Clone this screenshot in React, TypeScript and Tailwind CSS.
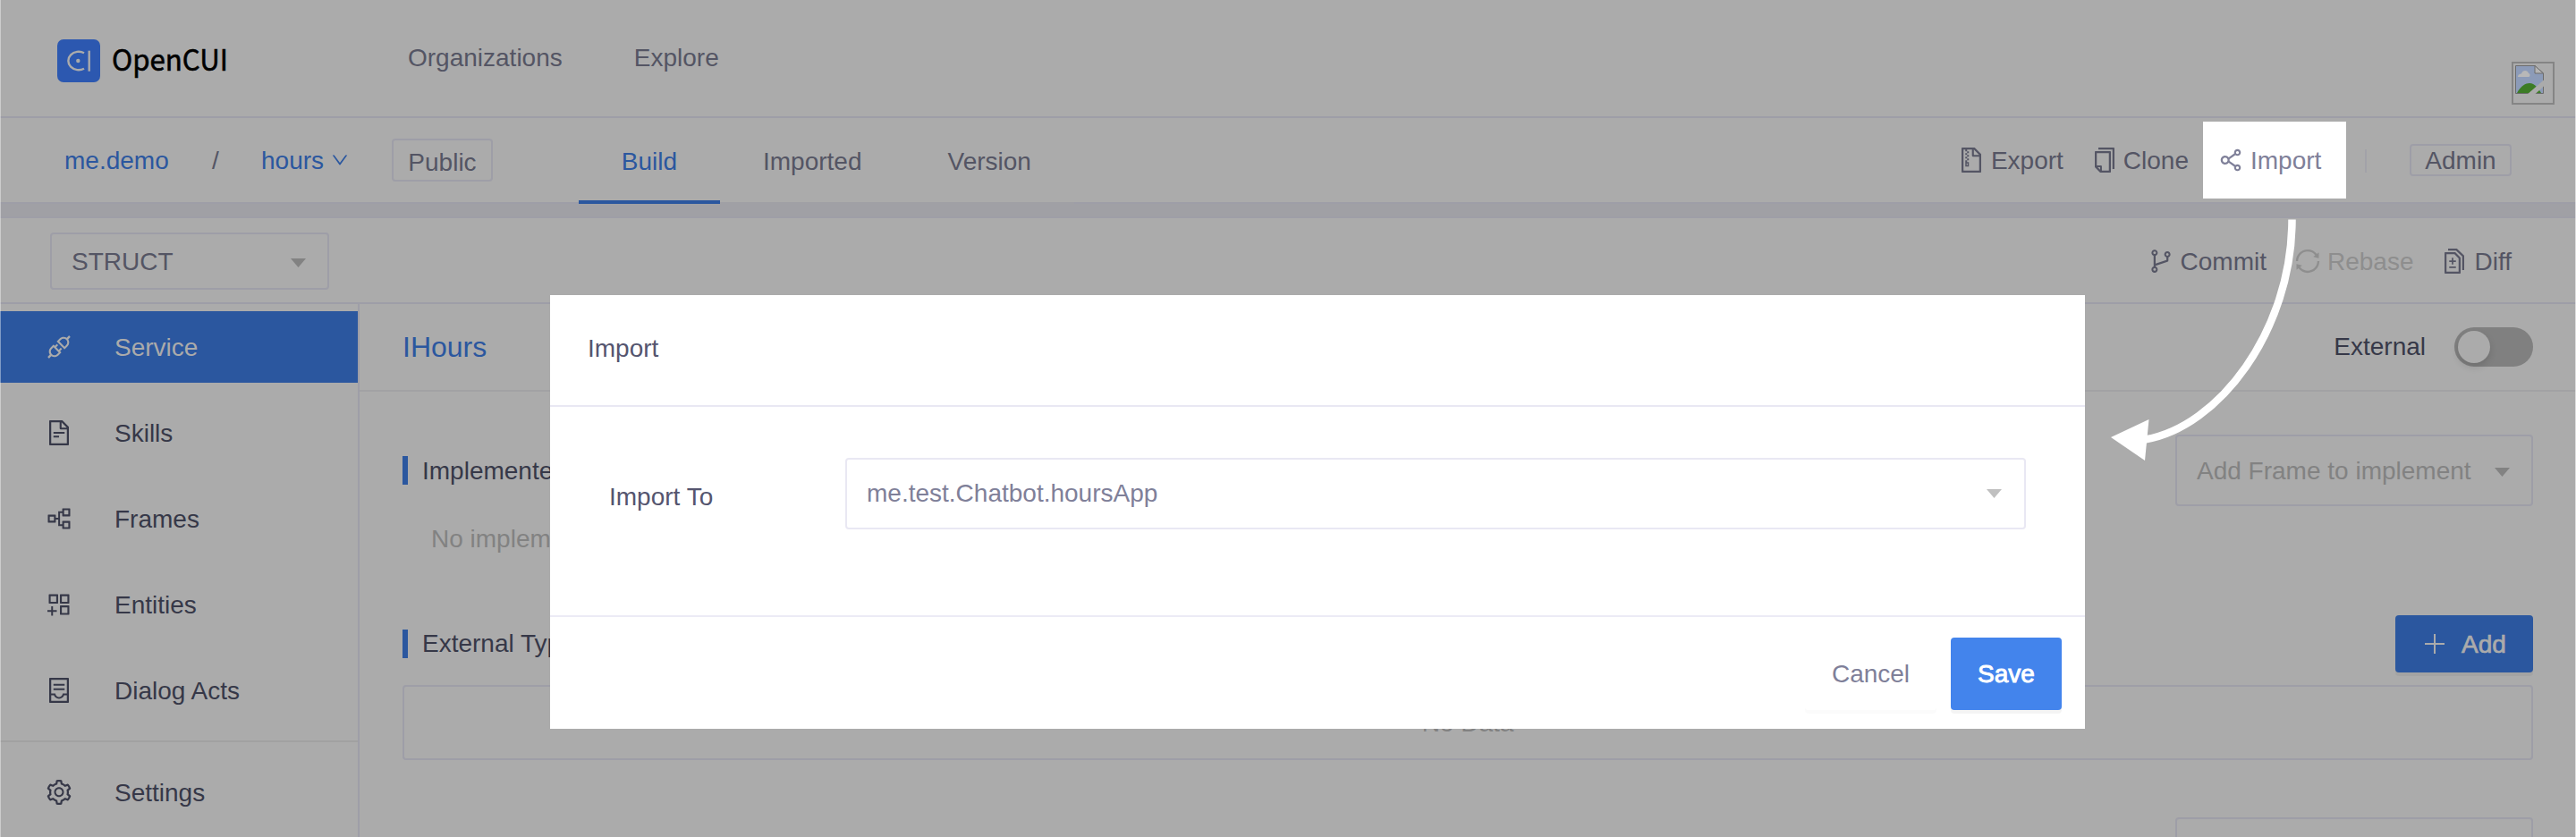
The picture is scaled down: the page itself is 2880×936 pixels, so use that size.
import React from "react";
import {
  AiOutlineApi,
  AiOutlineFileText,
  AiOutlinePartition,
  AiOutlineAppstoreAdd,
  AiOutlineContainer,
  AiOutlineSetting,
  AiOutlineFileZip,
  AiOutlineCopy,
  AiOutlineShareAlt,
  AiOutlineBranches,
  AiOutlineSync,
  AiOutlineDiff,
  AiOutlineDown,
} from "react-icons/ai";

function Caret({ className = "" }: { className?: string }) {
  return (
    <svg className={`h-[10px] w-[17px] shrink-0 ${className}`} viewBox="0 0 17 10">
      <path d="M0 0H17L8.500 10Z" fill="currentColor" />
    </svg>
  );
}

function Label({ children }: { children: React.ReactNode }) {
  return <span className="pt-0.5">{children}</span>;
}

function Logo() {
  return (
    <svg className="h-12 w-12" viewBox="0 0 48 48" fill="none">
      <rect width="48" height="48" rx="7" fill="#2c58b0" />
      <path d="M30 15.300A11.600 10.200 0 1 0 30 32.700" stroke="#ababab" strokeWidth="2.400" />
      <path d="M35.700 12.700V35.700" stroke="#ababab" strokeWidth="2.400" />
      <circle cx="23.300" cy="24" r="2.200" fill="#ababab" />
    </svg>
  );
}

function BrokenImage() {
  return (
    <svg className="h-12 w-12" viewBox="0 0 48 48" fill="none">
      <rect x="1" y="1" width="46" height="46" stroke="#858585" strokeWidth="2" />
      <path d="M4.500 4.500H26L35.500 13V35.500H4.500Z" fill="#8c9bb8" stroke="#6c6c6c" />
      <path d="M26 4.500V13H35.500Z" fill="#b4b4b4" stroke="#6c6c6c" />
      <path d="M7 17C7 14 10 13.500 11 13.500C12 9 18 9 19 13C21 13 21 17 19 17Z" fill="#b8b8b8" />
      <path d="M6 35C10 27 16 24 20 24C26 24 30 30 33 35Z" fill="#3c7c26" />
      <path d="M17.500 36.500L36.500 20V27L26 36.500Z" fill="#ababab" />
    </svg>
  );
}

const menu = [
  { label: "Service", Icon: AiOutlineApi, active: true },
  { label: "Skills", Icon: AiOutlineFileText, active: false },
  { label: "Frames", Icon: AiOutlinePartition, active: false },
  { label: "Entities", Icon: AiOutlineAppstoreAdd, active: false },
  { label: "Dialog Acts", Icon: AiOutlineContainer, active: false },
];

function TopBar() {
  return (
    <header className="flex h-[132px] border-b-2 border-[#9e9ea7] pl-16 pr-6">
      <div className="flex w-[392px] pt-11">
        <Logo />
        <span className="ml-[13px] mt-[-3px] origin-left scale-x-[0.945] font-['Noto_Sans_CJK_SC','Noto_Sans',sans-serif] text-[33px] leading-[48px] text-black [-webkit-text-stroke:0.6px]">
          OpenCUI
        </span>
      </div>
      <nav className="flex gap-20 pt-[45px] leading-10">
        <span>Organizations</span>
        <span>Explore</span>
      </nav>
      <div className="ml-auto pt-[69px]">
        <BrokenImage />
      </div>
    </header>
  );
}

function ProjectBar() {
  return (
    <div className="flex h-24 border-b-2 border-[#9e9ea7] pr-[72px]">
      <div className="flex w-[647px] items-start pl-[72px] pt-7 leading-10">
        <span className="w-[165px] text-[#2b579f]">me.demo</span>
        <span className="w-[55px]">/</span>
        <span className="text-[#2b579f]">hours</span>
        <AiOutlineDown className="ml-[7px] mt-2 size-[22px] text-[#2b579f]" />
        <span className="ml-auto mr-24 mt-[-5px] flex h-12 w-[113px] items-center justify-center rounded border-2 border-[#9e9ea7] pt-1.5">
          Public
        </span>
      </div>
      <nav className="flex h-24 w-[554px] border-b-2 border-[#a0a0a5] leading-10">
        <span className="flex h-24 w-[158px] justify-center border-b-4 border-[#2b579f] pt-[29px] text-[#2b579f]">
          Build
        </span>
        <span className="pl-12 pt-[29px]">Imported</span>
        <span className="pl-24 pt-[29px]">Version</span>
      </nav>
      <div className="ml-auto flex items-start pt-[27px]">
        <span className="flex h-10 items-center">
          <AiOutlineFileZip className="mr-1.5 size-8" />
          <Label>Export</Label>
        </span>
        <span className="ml-[30px] flex h-10 items-center">
          <AiOutlineCopy className="mr-[5px] size-8" />
          <Label>Clone</Label>
        </span>
        <span className="ml-4 mt-[-23px] flex h-[86px] w-40 items-center bg-white pl-[15px] text-[#7f8099]">
          <AiOutlineShareAlt className="mr-1.5 size-8" />
          <Label>Import</Label>
        </span>
        <span className="ml-[21px] mt-2 h-[26px] w-0.5 bg-[#a2a2a8]" />
        <span className="ml-12 mt-0.5 flex h-9 w-[114px] items-center justify-center rounded border-2 border-[#9e9ea7]">
          <Label>Admin</Label>
        </span>
      </div>
    </div>
  );
}

function ToolBar() {
  return (
    <div className="flex h-[98px] border-b-2 border-t-2 border-[#9e9ea7] pl-14 pr-[72px] pt-4">
      <div className="flex h-16 w-[312px] items-center justify-between rounded border-2 border-[#9e9ea7] pl-[22px] pr-6">
        <Label>STRUCT</Label>
        <Caret className="mt-1 text-[#828282]" />
      </div>
      <div className="ml-auto mt-4 flex h-8 items-center">
        <AiOutlineBranches className="mr-[6px] size-8" />
        <Label>Commit</Label>
        <span className="ml-[30px] flex items-center text-[#8e8e8e]">
          <AiOutlineSync className="mr-[6px] size-8" />
          <Label>Rebase</Label>
        </span>
        <AiOutlineDiff className="ml-[29px] mr-[7px] size-8" />
        <Label>Diff</Label>
      </div>
    </div>
  );
}

function Sidebar() {
  return (
    <aside className="w-[402px] shrink-0 border-r-2 border-[#9e9ea7] pt-2 text-[#363848]">
      {menu.map(({ label, Icon, active }) => (
        <div
          key={label}
          className={
            active
              ? "mb-4 flex h-20 items-center bg-[#2b579f] pl-[50px] text-[#ababab]"
              : "mb-4 flex h-20 items-center pl-[50px]"
          }
        >
          <Icon className="mr-[46px] size-8" />
          <Label>{label}</Label>
        </div>
      ))}
      <div className="flex h-[114px] items-center border-t-2 border-[#a1a1a1] pl-[50px]">
        <AiOutlineSetting className="mr-[46px] size-8" />
        <Label>Settings</Label>
      </div>
    </aside>
  );
}

function Content() {
  return (
    <main className="flex flex-1 flex-col text-[#363848]">
      <div className="flex h-[98px] shrink-0 items-center border-b-2 border-[#a2a2a4] px-12">
        <h1 className="text-[32px] leading-8 text-[#2b579f]">IHours</h1>
        <span className="ml-auto">External</span>
        <span className="ml-8 flex h-11 w-[88px] items-center rounded-full bg-[#808080] px-1">
          <span className="size-9 rounded-full bg-[#ababab] shadow-[0_4px_8px_rgba(0,0,0,0.14)]" />
        </span>
      </div>
      <div className="flex h-[128px] shrink-0 px-12 pt-12">
        <div className="mt-6 h-8 w-1.5 bg-[#2b579f]" />
        <span className="ml-4 mt-[21px] leading-10">Implemented Interfaces</span>
        <div className="ml-auto flex h-20 w-[400px] items-center justify-between rounded border-2 border-[#9e9ea7] pl-[22px] pr-6 text-[#828282]">
          <Label>Add Frame to implement</Label>
          <Caret className="mt-1" />
        </div>
      </div>
      <p className="h-[72px] shrink-0 pl-20 pt-[21px] text-[#828282]">No implemented interface</p>
      <div className="mt-[50px] flex h-16 shrink-0 px-12">
        <div className="mt-4 h-8 w-1.5 bg-[#2b579f]" />
        <span className="ml-4 mt-3 leading-10">External Type</span>
        <button className="ml-auto flex h-16 w-[154px] items-center rounded bg-[#2b579f] pl-[33px] text-[#ababab] shadow-[0_4px_0_rgba(0,0,0,0.045)]">
          <svg className="mr-[19px] size-[22px]" viewBox="0 0 22 22" fill="none">
            <path d="M11 0V22M0 11H22" stroke="currentColor" strokeWidth="2" />
          </svg>
          <span className="pt-0.5 [-webkit-text-stroke:0.7px]">Add</span>
        </button>
      </div>
      <div className="mx-12 mt-[14px] flex h-[84px] shrink-0 items-center justify-center rounded border-2 border-[#9e9ea7] text-[#828282]">
        <Label>No Data</Label>
      </div>
      <div className="ml-auto mr-12 mt-16 h-20 w-[400px] shrink-0 rounded border-2 border-[#9e9ea7]" />
    </main>
  );
}

function ImportDialog() {
  return (
    <section className="absolute left-[615px] top-[330px] flex h-[485px] w-[1716px] flex-col bg-white text-[#55556f]">
      <h2 className="h-[125px] border-b-2 border-[#e9e8f3] pl-[42px] pt-10 leading-10">Import</h2>
      <div className="flex h-[235px] border-b-2 border-[#ecebf5] pl-[66px] pt-[57px]">
        <label className="w-[264px] pt-6 leading-10">Import To</label>
        <div className="flex h-20 w-[1320px] items-center justify-between rounded border-2 border-[#e9e8f3] pl-[22px] pr-[25px] text-[#7f8099]">
          <span>me.test.Chatbot.hoursApp</span>
          <Caret className="text-[#c0c0c0]" />
        </div>
      </div>
      <div className="flex justify-end gap-4 pr-[26px] pt-[23px]">
        <button className="h-[81px] w-[147px] rounded text-[#7f8099] shadow-[0_4px_0_rgba(0,0,0,0.016)]">Cancel</button>
        <button className="h-[81px] w-[124px] rounded bg-[#4384ec] text-white shadow-[0_4px_0_rgba(0,0,0,0.045)] [-webkit-text-stroke:0.9px]">
          Save
        </button>
      </div>
    </section>
  );
}

export default function App() {
  return (
    <div className="relative h-[936px] w-[2880px] overflow-hidden bg-[#ababab] font-['Liberation_Sans',Arial,sans-serif] text-[28px] leading-8 text-[#545564]">
      <TopBar />
      <ProjectBar />
      <div className="h-[14px] bg-[#a0a0a5]" />
      <ToolBar />
      <div className="flex h-[596px]">
        <Sidebar />
        <Content />
      </div>
      <ImportDialog />
      <svg className="absolute left-[2350px] top-[240px] h-[290px] w-[230px]" viewBox="2350 240 230 290" fill="none">
        <path d="M2562.500 245.500C2562.500 370 2480 478 2398 491.500" stroke="#fff" strokeWidth="8.500" />
        <path d="M2360 489L2402.500 469L2398 515Z" fill="#fff" />
      </svg>
      <div className="absolute inset-y-0 left-0 w-px bg-white/40" />
      <div className="absolute inset-y-0 right-0 w-px bg-white/60" />
    </div>
  );
}
